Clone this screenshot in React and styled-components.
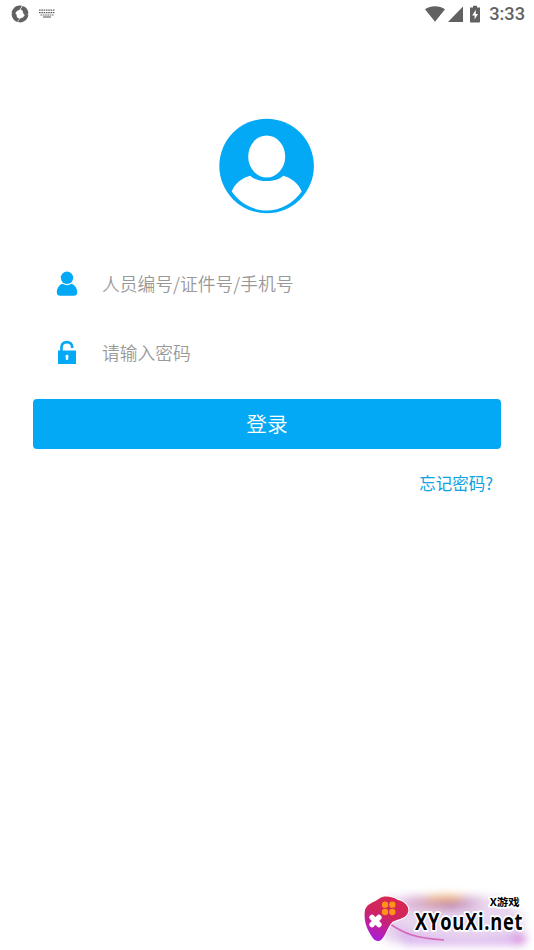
import styled, { createGlobalStyle } from "styled-components";

const GlobalStyle = createGlobalStyle`
  * {
    box-sizing: border-box;
  }

  body {
    margin: 0;
    background-color: white;
    font-family: "Noto Sans CJK SC", sans-serif;
  }
`;

const Container = styled.div`
  position: relative;
  width: 100%;
  max-width: 534px;
  height: 950px;
  overflow: hidden;
  background-color: white;
`;

const StatusBar = styled.header`
  height: 28px;
  padding: 0 9px 1px 11px;
  display: flex;
  justify-content: space-between;
  align-items: center;
  color: #616161;
`;

const StatusGroup = styled.div`
  display: flex;
  align-items: center;
  gap: ${(props) => props.$gap}px;
`;

const Time = styled.span`
  margin-left: 2px;
  font-family: Roboto, sans-serif;
  font-size: 18.2px;
  font-weight: 500;
  line-height: 27px;
`;

const Icon = styled.svg`
  display: block;
  flex-shrink: 0;
`;

const Avatar = styled(Icon)`
  margin: 90px auto 0;
`;

const Form = styled.form`
  padding: 35px 33px 0;
`;

const Field = styled.label`
  height: 69px;
  padding-left: 23px;
  display: flex;
  align-items: center;
  gap: 24px;
`;

const Input = styled.input`
  flex: 1;
  min-width: 0;
  height: 40px;
  padding: 0 0 1px;
  border: none;
  outline: none;
  background: none;
  font-family: inherit;
  font-size: 17.75px;
  font-weight: 350;

  &::placeholder {
    color: #999;
    opacity: 1;
  }
`;

const Button = styled.button`
  display: block;
  width: 100%;
  height: 50px;
  margin-top: 12px;
  padding: 0 0 2px;
  border: none;
  border-radius: 4px;
  background-color: #03a9f5;
  color: white;
  font-family: inherit;
  font-size: 20.7px;
  font-weight: 350;
  cursor: pointer;
`;

const Forgot = styled.a`
  display: block;
  margin: 22px 8px 0 0;
  color: #0da2e3;
  font-size: 16.5px;
  line-height: 24px;
  text-align: right;
`;

const Watermark = styled.svg`
  position: absolute;
  right: 0;
  bottom: 0;
`;

const App = () => {
  return (
    <>
      <GlobalStyle />
      <Container>
        <StatusBar>
          <StatusGroup $gap={10}>
            <Icon width="18" height="18" viewBox="0 0 18 18" fill="currentColor">
              <path d="M3.2 2.8C5.2 .6 8.1 0 11 .8L8.8 4.4 6 6 4.2 8.3 .6 8.2C.8 6 1.8 4.2 3.2 2.8Z" />
              <path d="M11.8 1C15 2 17.3 4.9 17.4 8.2L15.2 11.2 12.4 8.8 11.6 5.8 9.6 4.3Z" />
              <path d="M17.4 9.6C17.1 13.7 13.8 17.3 9.8 17.4L6.8 17 9 13.4 11.9 12.4 13.9 10Z" />
              <path d="M.6 9.1 2.8 6.8 5.4 9.2 6 12.2 8.3 13.8 6.2 17C3 15.9.8 12.8 .6 9.1Z" />
            </Icon>
            <Icon width="16" height="9" viewBox="0 0 16 9" stroke="currentColor">
              <path d="M0 1.2H16M0 3.7H16" strokeWidth="1.3" strokeDasharray="1.6 .7" />
              <path d="M1.5 6H14.5" strokeWidth="1.1" strokeDasharray="1.6 .7" />
              <path d="M4 8H12" strokeWidth="1.1" />
            </Icon>
          </StatusGroup>
          <StatusGroup $gap={3}>
            <Icon width="20" height="16" viewBox="0 0 20 16" fill="currentColor">
              <path d="M0 3.3C5.5-.8 14.5-.8 20 3.3L10 15.8Z" />
            </Icon>
            <Icon width="15" height="16" viewBox="0 0 15 16" fill="currentColor">
              <path d="M0 16 15 .5V16Z" />
            </Icon>
            <Icon width="18" height="18" viewBox="0 0 18 18" fill="currentColor">
              <path d="M7 .8H11V2.5H14V16.7Q14 17.5 13.2 17.5H4.8Q4 17.5 4 16.7V2.5H7Z" />
              <path d="M9.8 4.8 6.2 10.5H8.6V14.6L12 9H9.8Z" fill="white" />
            </Icon>
            <Time>3:33</Time>
          </StatusGroup>
        </StatusBar>

        <Avatar width="96" height="96" viewBox="0 0 96 96">
          <circle cx="47.6" cy="48" r="47.3" fill="#03a9f5" />
          <ellipse cx="47.7" cy="38.5" rx="18.5" ry="21" fill="white" />
          <path
            d="M31.2 57.7C37.7 64.7 57.7 64.7 64.2 57.7C72.7 60 79.7 65.5 82.7 73.5C74.7 85 61.7 92.5 47.7 92.5C33.7 92.5 20.7 85 12.7 73.5C15.7 65.5 22.7 60 31.2 57.7Z"
            fill="white"
          />
        </Avatar>

        <Form>
          <Field>
            <Icon width="22" height="26" viewBox="0 0 22 26" fill="#03a9f5">
              <circle cx="11" cy="6.8" r="6.2" />
              <path d="M6.5 12.8Q11 15.6 15.5 12.8C19 14 21.2 17.5 21.2 21.3Q21.2 24.8 17.7 24.8H4.3Q.8 24.8.8 21.3C.8 17.5 3 14 6.5 12.8Z" />
            </Icon>
            <Input placeholder="人员编号/证件号/手机号" />
          </Field>
          <Field>
            <Icon width="22" height="26" viewBox="0 0 22 26">
              <path
                d="M5.5 12V6.9C5.5 .4 16.2 .4 16.2 6.9V8"
                fill="none"
                stroke="#03a9f5"
                strokeWidth="2.7"
              />
              <path d="M2 10.5H20V24H2Z" fill="#03a9f5" />
              <path d="M11 14.8A1.5 1.5 0 0 1 12.2 17.3V19.8H9.8V17.3A1.5 1.5 0 0 1 11 14.8Z" fill="white" />
            </Icon>
            <Input type="password" placeholder="请输入密码" />
          </Field>
          <Button type="button">登录</Button>
          <Forgot>忘记密码?</Forgot>
        </Form>

        <Watermark width="180" height="70" viewBox="0 0 540 210">
          <defs>
            <linearGradient id="pad" x1="0.7" y1="0" x2="0.25" y2="1">
              <stop offset="0" stopColor="#d92850" />
              <stop offset="0.45" stopColor="#cf2460" />
              <stop offset="1" stopColor="#a91be0" />
            </linearGradient>
            <linearGradient id="glow" x1="0" y1="0" x2="1" y2="0">
              <stop offset="0" stopColor="#e3c0e5" />
              <stop offset="0.3" stopColor="#d6a8bc" />
              <stop offset="0.55" stopColor="#bd88b8" />
              <stop offset="1" stopColor="#efe0f4" />
            </linearGradient>
            <filter id="blur" x="-30%" y="-60%" width="160%" height="220%">
              <feGaussianBlur stdDeviation="12" />
            </filter>
          </defs>
          <g filter="url(#blur)">
            <path d="M100 50H440L510 110V190H110L60 150Z" fill="#e8d6ef" />
            <path d="M150 48H405V92H150Z" fill="url(#glow)" />
            <ellipse cx="275" cy="55" rx="60" ry="10" fill="#edb176" />
            <path d="M115 132C210 185 380 183 510 160V196H150Z" fill="#dcb8ef" />
            <ellipse cx="495" cy="176" rx="24" ry="13" fill="#d88bdc" />
          </g>
          <path
            d="M108 132C150 160 180 174 270 180"
            fill="none"
            stroke="#d668b8"
            strokeWidth="5"
          />
          <path
            d="M32 97C34 70 60 69 77 55C89 45 118 50 132 60C149 64 165 76 163 94C159 115 135 117 116 125C102 138 99 159 84 177C76 187 64 184 57 175C40 151 30 129 32 97Z"
            fill="url(#pad)"
            stroke="white"
            strokeWidth="6"
            strokeLinejoin="round"
            paintOrder="stroke"
          />
          <path
            d="M54 112 75 134M75 112 54 134"
            stroke="white"
            strokeWidth="16"
            strokeLinecap="round"
          />
          <g fill="#ff9419">
            <circle cx="93" cy="74" r="9.5" />
            <circle cx="115" cy="74" r="9.5" />
            <circle cx="93" cy="96" r="9.5" />
            <circle cx="115" cy="96" r="9.5" />
          </g>
          <g
            fill="black"
            stroke="white"
            strokeWidth="11"
            strokeLinejoin="round"
            paintOrder="stroke"
            fontWeight="700"
          >
            <text
              x="407"
              y="78"
              fontFamily="'Noto Sans CJK SC', sans-serif"
              fontSize="32"
              textLength="90"
              lengthAdjust="spacingAndGlyphs"
            >
              X游戏
            </text>
            <text
              x="183"
              y="149"
              fontFamily="'Open Sans', sans-serif"
              fontSize="70"
              letterSpacing="3"
              textLength="325"
              lengthAdjust="spacingAndGlyphs"
            >
              XYouXi.net
            </text>
          </g>
        </Watermark>
      </Container>
    </>
  );
};

export default App;
